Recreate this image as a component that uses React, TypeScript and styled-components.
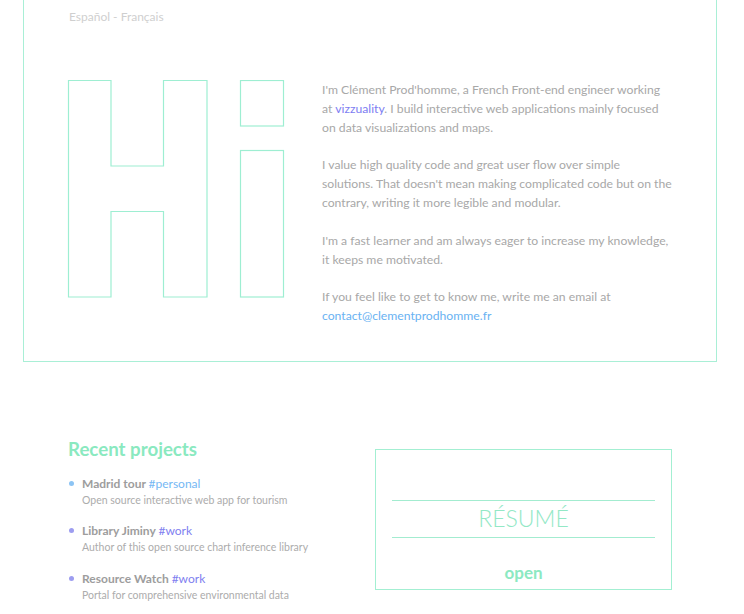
import React from "react";
import styled, { createGlobalStyle } from "styled-components";

const Global = createGlobalStyle`
  html, body { margin: 0; padding: 0; background: #fff; }
  body { font-family: Lato, "Open Sans", "Liberation Sans", sans-serif; overflow: hidden; }
  * { box-sizing: border-box; }
`;

const Page = styled.div`
  width: 744px;
  height: 614px;
  overflow: hidden;
`;

const Card = styled.section`
  margin: -30px 27px 0 23px;
  padding: 36px 20px 36px 43px;
  border: 1px solid #a9efd6;
`;

const Langs = styled.div`
  margin-left: 2px;
  font-size: 12px;
  line-height: 19px;
  color: #cfcfcf;
`;

const Intro = styled.div`
  display: flex;
  align-items: flex-start;
  gap: 37px;
  margin-top: 54px;
`;

const HiArt = styled.svg`
  flex: none;
  display: block;
`;

const Text = styled.div`
  width: 351px;
  font-size: 12.2px;
  line-height: 19px;
  color: #a8a8a8;
  p { margin: 0 0 18.3px; }
  p:last-child { margin-bottom: 0; }
`;

const Link = styled.a<{ $tone: "purple" | "blue" }>`
  color: ${(p) => (p.$tone === "purple" ? "#7d7df2" : "#69b2f2")};
  text-decoration: none;
`;

const Lower = styled.section`
  display: flex;
  align-items: flex-start;
  padding: 75px 0 0 68px;
`;

const Projects = styled.div`
  width: 307px;
`;

const Heading = styled.h2`
  margin: 0 0 14px;
  font-size: 18.7px;
  line-height: 24px;
  font-weight: 700;
  color: #8ae9c0;
`;

const List = styled.ul`
  list-style: none;
  margin: 0;
  padding: 0;
`;

const Item = styled.li`
  display: grid;
  grid-template-columns: 14px 1fr;
  margin-bottom: 13.5px;
`;

const Dot = styled.span<{ $color: string }>`
  width: 5px;
  height: 5px;
  margin: 6px 0 0 1px;
  border-radius: 50%;
  background: ${(p) => p.$color};
`;

const Title = styled.div`
  font-size: 12px;
  line-height: 17px;
  font-weight: 700;
  color: #9d9d9d;
`;

const Tag = styled.span<{ $color: string }>`
  font-weight: 400;
  color: ${(p) => p.$color};
`;

const Desc = styled.div`
  grid-column: 2;
  font-size: 10.5px;
  line-height: 17px;
  color: #acacac;
`;

const Resume = styled.div`
  width: 297px;
  height: 141px;
  margin-top: 12px;
  border: 1px solid #a3efd2;
  padding: 50px 16px 0 16px;
  display: flex;
  flex-direction: column;
  align-items: stretch;
`;

const ResumeLabel = styled.div`
  height: 38px;
  border-top: 1px solid #a3ecd0;
  border-bottom: 1px solid #a3ecd0;
  display: flex;
  align-items: center;
  justify-content: center;
  font-size: 23px;
  font-weight: 300;
  color: #93e8c6;
  padding-bottom: 2px;
`;

const Open = styled.div`
  margin-top: 24px;
  text-align: center;
  font-size: 17px;
  line-height: 22px;
  font-weight: 700;
  color: #8ce9c2;
`;

const mint = "#9eeed2";

const projects = [
  { name: "Madrid tour", tag: "#personal", color: "#8cc4f4", tagColor: "#75b8f4", desc: "Open source interactive web app for tourism" },
  { name: "Library Jiminy", tag: "#work", color: "#9d9df0", tagColor: "#8080f0", desc: "Author of this open source chart inference library" },
  { name: "Resource Watch", tag: "#work", color: "#9d9df0", tagColor: "#8080f0", desc: "Portal for comprehensive environmental data" },
];

export default function App() {
  return (
    <Page>
      <Global />
      <Card>
        <Langs>Español - Français</Langs>
        <Intro>
          <HiArt width="218" height="218" viewBox="0 0 218 218" fill="none">
            <path
              d="M1.5 0.5 H44 V86 H96.5 V0.5 H140 V217 H96.5 V131.5 H44 V217 H1.5 Z"
              stroke={mint}
              strokeWidth="1.2"
            />
            <rect x="173.5" y="0.5" width="43" height="45.5" stroke={mint} strokeWidth="1.2" />
            <rect x="173.5" y="70.5" width="43" height="146.5" stroke={mint} strokeWidth="1.2" />
          </HiArt>
          <Text>
            <p>
              I'm Clément Prod'homme, a French Front-end engineer working at{" "}
              <Link $tone="purple" href="#">vizzuality</Link>. I build interactive web applications mainly focused on data visualizations and maps.
            </p>
            <p>
              I value high quality code and great user flow over simple solutions. That doesn't mean making complicated code but on the contrary, writing it more legible and modular.
            </p>
            <p>I'm a fast learner and am always eager to increase my knowledge, it keeps me motivated.</p>
            <p>
              If you feel like to get to know me, write me an email at{" "}
              <Link $tone="blue" href="#">contact@clementprodhomme.fr</Link>
            </p>
          </Text>
        </Intro>
      </Card>
      <Lower>
        <Projects>
          <Heading>Recent projects</Heading>
          <List>
            {projects.map((p) => (
              <Item key={p.name}>
                <Dot $color={p.color} />
                <Title>
                  {p.name} <Tag $color={p.tagColor}>{p.tag}</Tag>
                </Title>
                <Desc>{p.desc}</Desc>
              </Item>
            ))}
          </List>
        </Projects>
        <Resume>
          <ResumeLabel>RÉSUMÉ</ResumeLabel>
          <Open>open</Open>
        </Resume>
      </Lower>
    </Page>
  );
}
